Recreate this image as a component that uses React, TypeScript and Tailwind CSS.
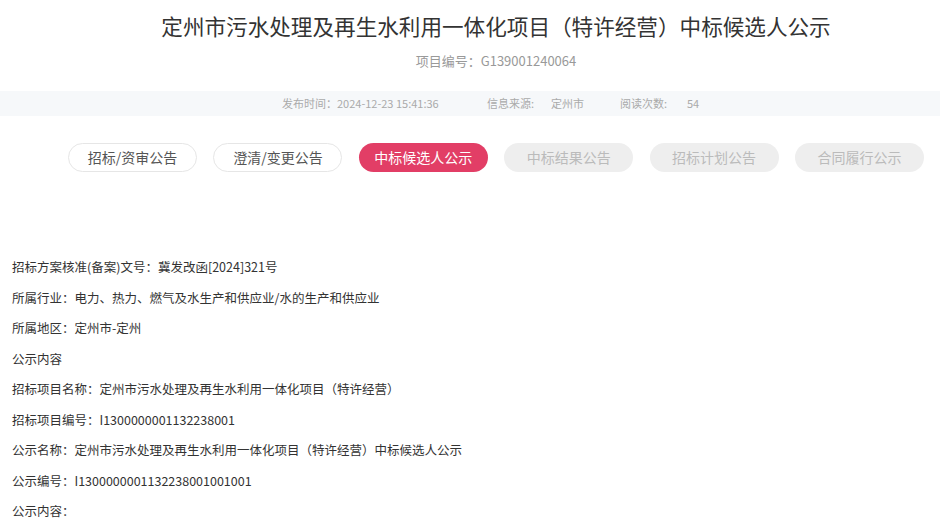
const tabs = [
  { label: '招标/资审公告', state: 'normal' },
  { label: '澄清/变更公告', state: 'normal' },
  { label: '中标候选人公示', state: 'active' },
  { label: '中标结果公告', state: 'disabled' },
  { label: '招标计划公告', state: 'disabled' },
  { label: '合同履行公示', state: 'disabled' },
];

const rows = [
  '招标方案核准(备案)文号：冀发改函[2024]321号',
  '所属行业：电力、热力、燃气及水生产和供应业/水的生产和供应业',
  '所属地区：定州市-定州',
  '公示内容',
  '招标项目名称：定州市污水处理及再生水利用一体化项目（特许经营）',
  '招标项目编号：I1300000001132238001',
  '公示名称：定州市污水处理及再生水利用一体化项目（特许经营）中标候选人公示',
  '公示编号：I1300000001132238001001001',
  '公示内容：',
];

const font = { fontFamily: '"Noto Sans CJK SC", "Noto Sans", sans-serif' };

export default function App() {
  return (
    <div className="w-[940px] h-[524px] overflow-hidden bg-white" style={font}>
      {/* Header */}
      <div className="pl-[52px] pt-[10px] text-center">
        <h1 className="text-[21.6px] leading-[32px] text-[#333]">
          定州市污水处理及再生水利用一体化项目（特许经营）中标候选人公示
        </h1>
        <p className="mt-[9px] text-[13px] leading-[20px] text-[#999]">项目编号：G139001240064</p>
      </div>

      {/* Meta bar */}
      <div className="mt-[20px] h-[25px] bg-[#f6f8fa] flex items-center pl-[282px] text-[11px] text-[#aaa]">
        <span className="w-[205px]">发布时间：2024-12-23 15:41:36</span>
        <span className="w-[64px]">信息来源:</span>
        <span className="w-[69px]">定州市</span>
        <span className="w-[67px]">阅读次数:</span>
        <span>54</span>
      </div>

      {/* Tabs */}
      <div className="mt-[27px] ml-[68px] w-[856px] flex justify-between">
        {tabs.map((t) => (
          <div
            key={t.label}
            className={
              t.state === 'active'
                ? 'w-[129px] h-[29px] rounded-full flex items-center justify-center text-[14px] bg-[#e23e66] text-white'
                : t.state === 'disabled'
                ? 'w-[129px] h-[29px] rounded-full flex items-center justify-center text-[14px] bg-[#eeeeee] text-[#bbb]'
                : 'w-[129px] h-[29px] rounded-full flex items-center justify-center text-[14px] bg-white border border-[#e6e6e6] text-[#555]'
            }
          >
            {t.label}
          </div>
        ))}
      </div>

      {/* Body */}
      <div className="mt-[85px] pl-[12px] flex flex-col gap-[11.5px] text-[12.5px] leading-[19px] text-[#333]">
        {rows.map((r) => (
          <p key={r}>{r}</p>
        ))}
      </div>
    </div>
  );
}
